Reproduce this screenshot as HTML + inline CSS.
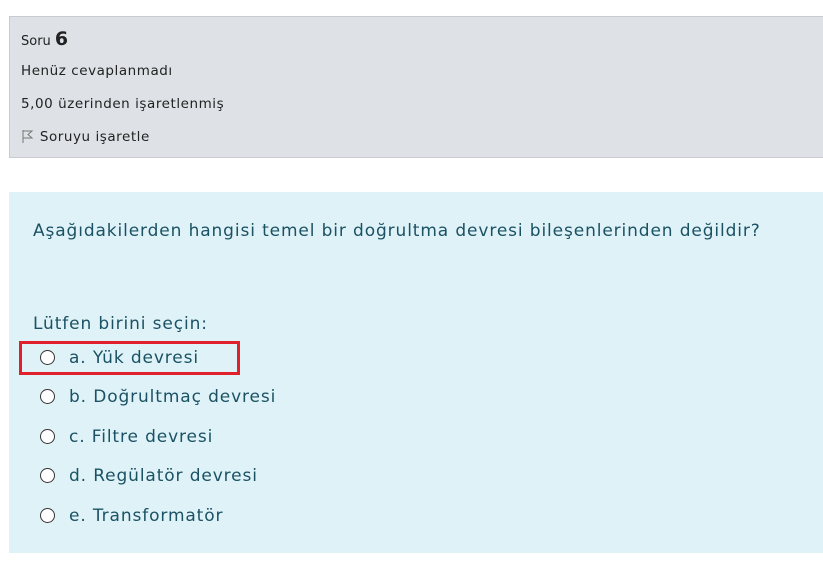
<!DOCTYPE html>
<html><head><meta charset="utf-8"><style>
body{margin:0;width:823px;height:576px;background:#fff;font-family:"DejaVu Sans","Liberation Sans",sans-serif;position:relative;overflow:hidden}
.info{position:absolute;left:9px;top:16px;width:813px;height:140px;background:#dee2e6;border:1px solid #c8cbcf;color:#222}
.info div{position:absolute;left:11px;font-size:13.5px;letter-spacing:0.55px;white-space:nowrap}
.q{position:absolute;left:9px;top:192px;width:814px;height:361px;background:#def2f8;color:#1b5263}
.q div{position:absolute;font-size:17px;letter-spacing:0.88px;white-space:nowrap}
.r{display:inline-block;width:13px;height:13px;border:1px solid #333;border-radius:50%;background:#fff;position:absolute}
.red{position:absolute;left:19px;top:341px;width:215px;height:28px;border:3px solid #e0202a}
</style></head><body>
<div class="info">
<div style="top:11px;font-size:13px;letter-spacing:0">Soru <b style="font-size:19px">6</b></div>
<div style="top:46px">Henüz cevaplanmadı</div>
<div style="top:79px">5,00 üzerinden işaretlenmiş</div>
<div style="top:112px"><svg width="14" height="14" viewBox="0 0 14 14" style="vertical-align:-2px"><path d="M2 1V14M2 2H11L7 5.5L11 9H2" fill="none" stroke="#777" stroke-width="1"/></svg> Soruyu işaretle</div>
</div>
<div class="q">
<div style="left:24px;top:29px">Aşağıdakilerden hangisi temel bir doğrultma devresi bileşenlerinden değildir?</div>
<div style="left:24px;top:122px">Lütfen birini seçin:</div>
<div style="left:60px;top:156px"><span class="r" style="left:-29px;top:2px"></span>a. Yük devresi</div>
<div style="left:60px;top:195px"><span class="r" style="left:-29px;top:2px"></span>b. Doğrultmaç devresi</div>
<div style="left:60px;top:235px"><span class="r" style="left:-29px;top:2px"></span>c. Filtre devresi</div>
<div style="left:60px;top:274px"><span class="r" style="left:-29px;top:2px"></span>d. Regülatör devresi</div>
<div style="left:60px;top:314px"><span class="r" style="left:-29px;top:2px"></span>e. Transformatör</div>
</div>
<div class="red"></div>
</body></html>
